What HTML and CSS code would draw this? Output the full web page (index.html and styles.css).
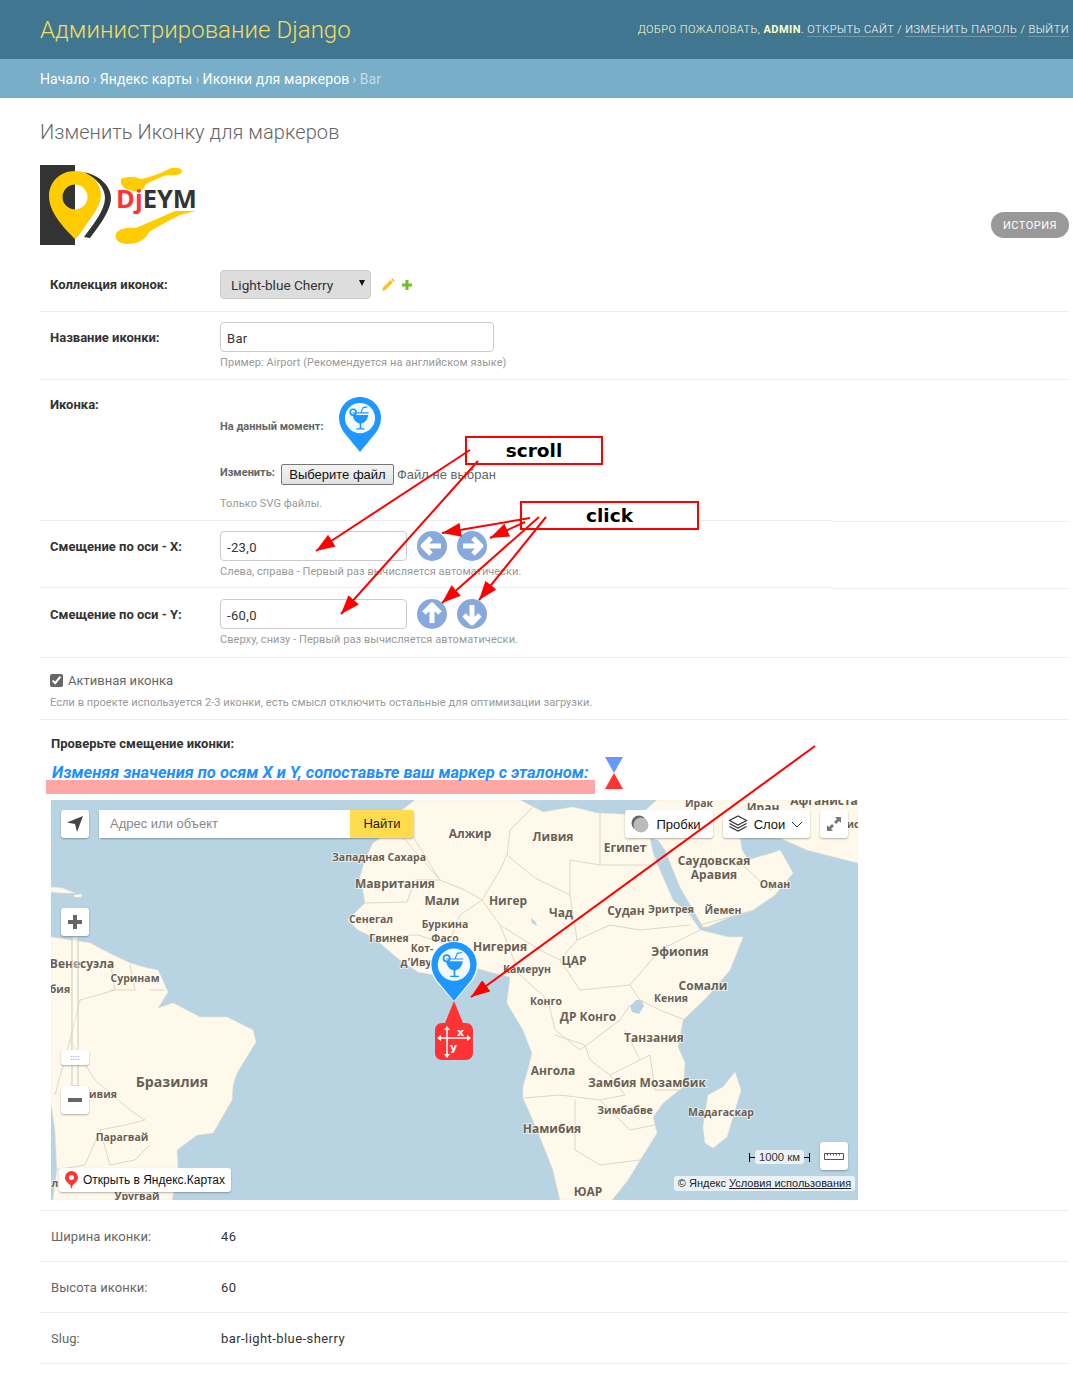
FILE: index.html
```html
<!DOCTYPE html>
<html lang="ru">
<head>
<meta charset="utf-8">
<title>Изменить Иконку для маркеров</title>
<link rel="stylesheet" href="styles.css">
</head>
<body>
<svg class="defs" width="0" height="0" aria-hidden="true">
  <defs>
    <symbol id="pin" viewBox="0 0 46 60">
      <path fill="#1e98ff" d="M23 0C10.300 0 0 10.300 0 23c0 6.200 2.400 11.200 5.500 15.800L23 60l17.500-21.200C43.600 34.200 46 29.200 46 23 46 10.300 35.700 0 23 0z"/>
      <circle cx="23" cy="23" r="16.500" fill="#f4faff"/>
      <path fill="#1e98ff" d="M15 19.500h17c-.6 4.800-3.600 8.400-7.600 9.500v5.200h3.600v1.300h-9v-1.300h3.600V29c-4-1.100-7-4.700-7.600-9.500z"/>
      <path fill="none" stroke="#1e98ff" stroke-width="1.200" d="M15 17.300h17.500M24 17l2.500-5.500 4.500-.8"/>
      <circle cx="15.500" cy="16.500" r="3.200" fill="none" stroke="#1e98ff" stroke-width="1.800"/>
    </symbol>
    <marker id="head" markerUnits="userSpaceOnUse" markerWidth="20" markerHeight="14" refX="19" refY="7" orient="auto">
      <path d="M0 0L19 7 0 14z" fill="#f00"/>
    </marker>
  </defs>
</svg>

<header class="site-header">
  <div class="branding">Администрирование Django</div>
  <div class="user-tools">Добро пожаловать, <strong>admin</strong>. <a>Открыть сайт</a> / <a>Изменить пароль</a> / <a>Выйти</a></div>
</header>
<nav class="crumbs"><a>Начало</a> <i>›</i> <a>Яндекс карты</a> <i>›</i> <a>Иконки для маркеров</a> <i>›</i> <span>Bar</span></nav>

<main class="content">
  <h1>Изменить Иконку для маркеров</h1>
  <div class="logo-bar">
    <svg class="logo" width="160" height="80" viewBox="40 165 160 80">
      <rect x="40" y="165" width="35" height="80" fill="#333"/>
      <path fill="#fc0" d="M75 171c-15 0-26 11-26 25 0 16 14 31 26 43 4-3 7-8 11-14 7-10 15-20 15-30 0-13-11-24-26-24z"/>
      <circle cx="75" cy="197" r="12.500" fill="#fff"/>
      <path fill="#333" d="M75 184.500a12.500 12.500 0 0 0 0 25z"/>
      <path fill="#333" d="M84 172c14 3 27 13 27 26 0 13-14 31-21 40l-6-1c9-12 21-27 21-39 0-11-9-20-21-26z"/>
      <path fill="#fc0" d="M121 179c6-3 15-2 20 0 10-2 19-6 26-9 4-3 14-3 15 1 0 4-8 5-14 4-6 1-13 5-22 9-2 5-5 8-12 7-7 0-15-5-13-12z"/>
      <path fill="#fc0" d="M196 211l-16 4c-11 5-21 11-31 17-3 8-12 12-21 12-9 0-14-5-12-10 2-5 10-7 20-6 14-6 27-12 39-17z"/>
      <text class="logo-text" x="116" y="208"><tspan class="logo-red">Dj</tspan>EYM</text>
    </svg>
    <a class="history">История</a>
  </div>

  <form class="admin-form">
    <div class="row row-collection">
      <label class="lbl">Коллекция иконок:</label>
      <div class="picker-wrap"><select class="picker"><option>Light-blue Cherry</option></select></div>
      <svg class="mini pencil" width="14" height="14" viewBox="0 0 14 14"><path fill="#f4c430" d="M2 9.500L9.500 2l2.500 2.500L4.500 12 1 13z"/><path fill="#e8a800" d="M10.300 1.200l1-.7 2.200 2.200-.7 1z"/></svg>
      <svg class="mini plus" width="12" height="12" viewBox="0 0 12 12"><path fill="#70bf2b" d="M4.500 1h3v3.500H11v3H7.500V11h-3V7.500H1v-3h3.500z"/></svg>
    </div>
    <div class="row row-name">
      <label class="lbl">Название иконки:</label>
      <div class="col">
        <input class="field field-wide" value="Bar">
        <p class="help">Пример: Airport (Рекомендуется на английском языке)</p>
      </div>
    </div>
    <div class="row row-icon">
      <label class="lbl lbl-icon">Иконка:</label>
      <div class="col">
        <div class="current"><span class="sub sub-now">На данный момент:</span><svg class="pin-small" width="42" height="55"><use href="#pin"/></svg></div>
        <div class="change"><span class="sub sub-change">Изменить:</span><span class="file-btn">Выберите файл</span><span class="file-none">Файл не выбран</span></div>
        <p class="help help-file">Только SVG файлы.</p>
      </div>
    </div>
    <div class="row row-x">
      <label class="lbl lbl-offset">Смещение по оси - X:</label>
      <div class="col">
        <div class="offset">
          <input class="field field-mid" value="-23,0">
          <svg class="round" width="30" height="30" viewBox="0 0 30 30"><circle cx="15" cy="15" r="15" fill="#87a9dc"/><path d="M14 7l-8 8 8 8M7 15h17" fill="none" stroke="#fff" stroke-width="5" stroke-linejoin="round"/></svg>
          <svg class="round" width="30" height="30" viewBox="0 0 30 30"><circle cx="15" cy="15" r="15" fill="#87a9dc"/><path d="M16 7l8 8-8 8M23 15H6" fill="none" stroke="#fff" stroke-width="5" stroke-linejoin="round"/></svg>
        </div>
        <p class="help">Слева, справа - Первый раз вычисляется автоматически.</p>
      </div>
    </div>
    <div class="row row-y">
      <label class="lbl lbl-offset">Смещение по оси - Y:</label>
      <div class="col">
        <div class="offset">
          <input class="field field-mid" value="-60,0">
          <svg class="round" width="30" height="30" viewBox="0 0 30 30"><circle cx="15" cy="15" r="15" fill="#87a9dc"/><path d="M7 14l8-8 8 8M15 7v17" fill="none" stroke="#fff" stroke-width="5" stroke-linejoin="round"/></svg>
          <svg class="round" width="30" height="30" viewBox="0 0 30 30"><circle cx="15" cy="15" r="15" fill="#87a9dc"/><path d="M7 16l8 8 8-8M15 23V6" fill="none" stroke="#fff" stroke-width="5" stroke-linejoin="round"/></svg>
        </div>
        <p class="help">Сверху, снизу - Первый раз вычисляется автоматически.</p>
      </div>
    </div>
    <div class="row row-active">
      <label class="check"><input type="checkbox" checked> Активная иконка</label>
      <p class="help help-active">Если в проекте используется 2-3 иконки, есть смысл отключить остальные для оптимизации загрузки.</p>
    </div>
    <div class="row row-map">
      <div class="map-title">Проверьте смещение иконки:</div>
      <div class="map-head">
        <div class="note-wrap">
          <div class="note">Изменяя значения по осям X и Y, сопоставьте ваш маркер с эталоном:</div>
          <div class="band"></div>
        </div>
        <svg class="hourglass" width="18" height="32" viewBox="0 0 18 32"><path fill="#6699ff" d="M0 0h18L9 16z"/><path fill="#ff3333" d="M9 16l9 16H0z"/></svg>
      </div>
      <div class="map">
        <svg class="map-art" width="807" height="400" viewBox="51 800 807 400">
          <rect x="51" y="800" width="807" height="400" fill="#b8d4e3"/>
          <path class="land" d="M415 800L402 810 395 828 373 843 365 860 360 877 363 890 365 903 348 920 358 930 373 937 388 950 400 960 418 972 440 976 473 967 490 972 510 977 507 1003 523 1030 532 1053 528 1070 523 1087 523 1098 532 1118 540 1137 553 1170 560 1200 612 1200 628 1180 640 1160 657 1133 653 1117 663 1103 683 1087 685 1063 678 1047 683 1020 707 997 730 970 743 937 728 937 700 930 690 915 673 900 662 875 653 853 650 838 640 815 597 813 573 807 543 812 520 800z"/>
          <path class="land" d="M640 815L657 800 858 800 858 863 807 850 780 838 740 838 742 850 748 860 772 853 780 850 793 873 775 895 753 910 730 917 707 927 703 927 680 887 665 850 658 840 650 838z"/>
          <path class="land" d="M51 937L90 943 113 955 130 963 147 968 158 970 168 992 158 1008 173 1003 200 1017 227 1017 253 1030 256 1042 237 1073 233 1085 232 1100 213 1133 197 1135 177 1150 178 1170 172 1200 53 1200 57 1170 55 1130 51 1103z"/>
          <path class="land" d="M51 887L62 888 75 893 62 893 51 892zM74 895L82 894 81 897 74 897z"/>
          <path class="land" d="M735 1072L741 1090 735 1110 727 1137 713 1148 705 1143 703 1127 708 1095 723 1087z"/>
          <path class="water" d="M636 1000h6l2 6-5 8-7-2-2-6zM531 918l4 3 2 5-5-3z"/>
          <path class="border" d="M395 828L440 880 415 880 407 902 365 903M402 810L415 840 440 880 465 890 482 900 500 870 507 855 510 830 540 800M507 855L535 878 570 895 570 860 600 865 652 865M600 865L600 813M570 895L577 940 560 960 540 950 500 925 482 900 460 915 448 945 418 935 373 937M577 940L610 925 640 930 690 925M560 960L580 990 630 985 660 950 700 930M630 985L640 1000 660 1010 685 1020M500 925L520 975 548 1000 555 1030 580 1050 620 1020 630 1005M555 1035L585 1045 590 1060 610 1075 625 1095 600 1100 560 1095 524 1098M610 1075L640 1060 650 1055 655 1090 680 1090M640 1060L625 1030M575 1100V1150L600 1165 640 1160M600 1100L630 1130 655 1125M737 860L770 890 790 880M700 925L755 910"/>
          <path class="border" d="M110 960L115 990 80 1000 70 1040 95 1080 130 1110 145 1120 125 1125 100 1130 110 1165 135 1160 150 1145M150 990L165 990M110 990L135 990 130 965M70 1040L55 1095M100 1130L85 1165 55 1170"/>
          <g class="labels">
            <text class="l-md" x="470" y="838">Алжир</text><text class="l-md" x="553" y="841">Ливия</text><text class="l-md" x="625" y="852">Египет</text>
            <text class="l-sm" x="699" y="807">Ирак</text><text class="l-md" x="763" y="812">Иран</text><text class="l-md" x="824" y="805">Афганиста</text><text class="l-sm" x="853" y="828">ис</text>
            <text class="l-sm" x="379" y="861">Западная Сахара</text><text class="l-md" x="395" y="888">Мавритания</text><text class="l-md" x="442" y="905">Мали</text><text class="l-md" x="508" y="905">Нигер</text><text class="l-md" x="561" y="917">Чад</text><text class="l-md" x="626" y="915">Судан</text><text class="l-sm" x="671" y="913">Эритрея</text><text class="l-sm" x="723" y="914">Йемен</text>
            <text class="l-md" x="714" y="865">Саудовская</text><text class="l-md" x="714" y="879">Аравия</text><text class="l-sm" x="775" y="888">Оман</text>
            <text class="l-sm" x="371" y="923">Сенегал</text><text class="l-sm" x="445" y="928">Буркина</text><text class="l-sm" x="445" y="942">Фасо</text><text class="l-sm" x="389" y="942">Гвинея</text><text class="l-sm" x="422" y="952">Кот-</text><text class="l-sm" x="416" y="966">д'Иву</text>
            <text class="l-md" x="500" y="951">Нигерия</text><text class="l-sm" x="527" y="973">Камерун</text><text class="l-md" x="574" y="965">ЦАР</text><text class="l-md" x="680" y="956">Эфиопия</text><text class="l-md" x="703" y="990">Сомали</text><text class="l-sm" x="671" y="1002">Кения</text><text class="l-sm" x="546" y="1005">Конго</text><text class="l-md" x="588" y="1021">ДР Конго</text><text class="l-md" x="654" y="1042">Танзания</text><text class="l-md" x="553" y="1075">Ангола</text><text class="l-md" x="647" y="1087">Замбия Мозамбик</text><text class="l-sm" x="625" y="1114">Зимбабве</text><text class="l-sm" x="721" y="1116">Мадагаскар</text><text class="l-md" x="552" y="1133">Намибия</text><text class="l-md" x="588" y="1196">ЮАР</text>
            <text class="l-md" x="82" y="968">Венесуэла</text><text class="l-sm" x="135" y="982">Суринам</text><text class="l-sm" x="60" y="993">бия</text><text class="l-lg" x="172" y="1087">Бразилия</text><text class="l-sm" x="103" y="1098">ивия</text><text class="l-sm" x="122" y="1141">Парагвай</text><text class="l-sm" x="55" y="1187">л</text><text class="l-sm" x="137" y="1200">Уругвай</text>
          </g>
          <rect class="track" x="72" y="936" width="6" height="150"/>
          <path class="pin-halo" d="M454 941c-13 0-24 10.500-24 23.500 0 6.200 2.500 11.500 5.500 16L454 1002l18.500-21.500c3-4.500 5.500-9.800 5.500-16C478 951.500 467 941 454 941z"/>
          <use href="#pin" x="431" y="942" width="46" height="59"/>
          <path fill="#ff3333" d="M454 1001l9 22h3c4 0 7 3 7 7v23c0 4-3 7-7 7h-24c-4 0-7-3-7-7v-23c0-4 3-7 7-7h3z"/>
          <path fill="none" stroke="#fff" stroke-width="1.500" d="M439 1038h31M447 1029v28"/>
          <path fill="#fff" d="M437 1038l4-3v6zM471 1038l-4-3v6zM447 1026l-3 4h6zM447 1058l-3-4h6z"/>
          <text class="xy" x="457" y="1036">x</text><text class="xy" x="450" y="1051">y</text>
        </svg>

        <div class="ctl ctl-locate"><svg width="18" height="18" viewBox="0 0 18 18"><path fill="#444" d="M17 1L1 7.500l8 1.500 2 8z"/></svg></div>
        <div class="search"><span class="search-input">Адрес или объект</span><span class="search-btn">Найти</span></div>
        <div class="ctl ctl-traffic"><svg width="18" height="18" viewBox="0 0 18 18"><circle cx="8" cy="8" r="7.500" fill="#666"/><circle cx="10" cy="10" r="7.500" fill="#bbb"/></svg><span>Пробки</span></div>
        <div class="ctl ctl-layers"><svg width="20" height="18" viewBox="0 0 20 18"><path fill="#fff" stroke="#333" stroke-width="1.200" d="M10 1l8.500 4.500-8.500 4.500-8.500-4.500z"/><path fill="none" stroke="#333" stroke-width="1.200" d="M1.500 8.500l8.500 4.500 8.500-4.500M1.500 11.500l8.500 4.500 8.500-4.500"/></svg><span>Слои</span><svg width="12" height="7" viewBox="0 0 12 7"><path fill="none" stroke="#333" d="M1 1l5 5 5-5"/></svg></div>
        <div class="ctl ctl-full"><svg width="16" height="16" viewBox="0 0 16 16"><path fill="#777" d="M9 1h6v6l-2-2-3 3-2-2 3-3zM7 15H1V9l2 2 3-3 2 2-3 3z"/></svg></div>
        <div class="ctl ctl-plus"><svg width="14" height="14" viewBox="0 0 14 14"><path fill="#666" d="M5 0h4v5h5v4H9v5H5V9H0V5h5z"/></svg></div>
        <div class="ctl ctl-handle"><span class="dots">::::</span></div>
        <div class="ctl ctl-minus"><svg width="14" height="4" viewBox="0 0 14 4"><rect width="14" height="4" fill="#666"/></svg></div>
        <div class="ctl ctl-open"><svg width="13" height="18" viewBox="0 0 13 18"><path fill="#f33" d="M6.500 0a6.500 6.500 0 0 1 6.500 6.500c0 3.500-3.500 5.500-5.500 8L6.500 18 5.500 14.500C3.500 12 0 10 0 6.500A6.500 6.500 0 0 1 6.500 0z"/><circle cx="6.500" cy="6.500" r="2.500" fill="#fff"/></svg><span>Открыть в Яндекс.Картах</span></div>
        <div class="scale"><i class="tick tick-l"></i><span>1000 км</span><i class="tick tick-r"></i></div>
        <div class="ctl ctl-ruler"><svg width="20" height="7" viewBox="0 0 20 7"><path fill="none" stroke="#555" d="M.5.500h19v6H.500zM3.500.500v2M6.500.500v2M9.500.500v2M12.500.500v2M15.500.500v2"/></svg></div>
        <div class="copy">© Яндекс <u>Условия использования</u></div>
      </div>
    </div>
    <div class="row ro"><span class="ro-l">Ширина иконки:</span><span class="ro-v">46</span></div>
    <div class="row ro"><span class="ro-l">Высота иконки:</span><span class="ro-v">60</span></div>
    <div class="row ro"><span class="ro-l">Slug:</span><span class="ro-v">bar-light-blue-sherry</span></div>
  </form>
</main>

<div class="annot">
  <div class="tag tag-scroll">scroll</div>
  <div class="tag tag-click">click</div>
  <svg class="annot-lines" width="1073" height="1394" viewBox="0 0 1073 1394">
    <g fill="none" stroke="#f00" stroke-width="2">
      <line x1="470" y1="450" x2="316" y2="551" marker-end="url(#head)"/>
      <line x1="478" y1="461" x2="341" y2="614" marker-end="url(#head)"/>
      <line x1="530" y1="518" x2="442" y2="533" marker-end="url(#head)"/>
      <line x1="525" y1="522" x2="490" y2="538" marker-end="url(#head)"/>
      <line x1="539" y1="517" x2="442" y2="603" marker-end="url(#head)"/>
      <line x1="546" y1="517" x2="479" y2="600" marker-end="url(#head)"/>
      <line x1="815" y1="746" x2="471" y2="997" marker-end="url(#head)"/>
    </g>
  </svg>
</div>
</body>
</html>
```
FILE: styles.css
```css
* { box-sizing: border-box; }
html, body { margin: 0; padding: 0; }
body { position: relative; height: 1394px; overflow: hidden; background: #fff; color: #333; font-family: Roboto, "Liberation Sans", sans-serif; font-size: 14px; }
.defs { position: absolute; }

.site-header { height: 59px; background: #417690; display: flex; justify-content: space-between; align-items: center; padding: 0 4px 0 40px; }
.branding { color: #f5dd5d; font-size: 24px; font-weight: 300; letter-spacing: .04px; }
.user-tools { color: #ffc; font-size: 11px; letter-spacing: .48px; text-transform: uppercase; font-weight: 300; }
.user-tools strong { font-weight: 700; }
.user-tools a { color: #fff; border-bottom: 1px solid rgba(255,255,255,.25); }

.crumbs { height: 39px; background: #79aec8; padding: 0 40px; display: flex; align-items: center; gap: 3px; color: #fff; font-size: 14px; letter-spacing: .1px; }
.crumbs i { font-style: normal; color: #c4dce8; }
.crumbs span { color: #c4dce8; }

.content { padding: 20px 4px 0 40px; }
h1 { margin: 0 0 19px; font-size: 20px; line-height: 28px; font-weight: 300; color: #666; letter-spacing: .07px; }
.logo-bar { height: 80px; display: flex; justify-content: space-between; align-items: flex-end; }
.logo { display: block; }
.logo-text { font-family: "Open Sans", "Noto Sans", sans-serif; font-size: 25.500px; font-weight: 700; fill: #333; }
.logo-red { fill: #ff3333; }
.history { height: 26px; width: 78px; margin-bottom: 7px; border-radius: 15px; background: #999; color: #fff; font-size: 11px; font-weight: 400; letter-spacing: .5px; text-transform: uppercase; display: flex; align-items: center; justify-content: center; }

.admin-form { margin-top: 11px; }
.row { position: relative; display: flex; border-bottom: 1px solid #eee; padding-left: 10px; font-size: 13px; }
.lbl { width: 170px; flex: none; font-size: 13px; font-weight: 700; color: #333; }
.col { display: flex; flex-direction: column; }
.help { margin: 4px 0 0; font-size: 11px; line-height: 14px; color: #999; letter-spacing: .06px; }

.row-collection { height: 56px; padding-top: 14px; align-items: flex-start; }
.row-collection .lbl { line-height: 29px; }
.picker-wrap { position: relative; width: 151px; height: 29px; flex: none; }
.picker-wrap::after { content: ""; position: absolute; right: 6px; top: 10px; border-left: 3.500px solid transparent; border-right: 3.500px solid transparent; border-top: 6px solid #111; }
.picker { appearance: none; -webkit-appearance: none; display: block; width: 100%; height: 100%; background: #ddd; border: 1px solid #ccc; border-radius: 4px; padding: 0 10px; font: 13.600px Roboto, sans-serif; color: #333; }
.mini { flex: none; margin-top: 8px; }
.pencil { margin-left: 10px; }
.plus { margin-left: 6px; margin-top: 9px; }

.field { height: 30px; border: 1px solid #ccc; border-radius: 4px; padding: 6px 6px 4px; font: 13px Roboto, sans-serif; letter-spacing: .35px; color: #333; background: #fff; }
.field-wide { width: 274px; }
.field-mid { width: 187px; }
.row-name { height: 68px; padding-top: 10px; }
.row-name .lbl, .lbl-offset { line-height: 32px; }

.row-icon { height: 142px; padding-top: 17px; }
.row-icon::after, .row-x::after { content: ""; position: absolute; left: 0; bottom: -1px; width: 792px; height: 2px; background: linear-gradient(#eee 50%, #fff 50%); }
.current { display: flex; align-items: center; gap: 15px; height: 55px; }
.sub { font-size: 11px; font-weight: 700; color: #666; }
.sub-now { margin-top: 3px; }
.pin-small { display: block; }
.change { display: flex; align-items: flex-start; margin-top: 12px; height: 21px; }
.sub-change { margin-right: 6px; line-height: 17px; }
.file-btn { width: 113px; height: 21px; border: 1px solid #767676; border-radius: 2px; background: linear-gradient(#f4f4f4, #e2e2e2); font: 13px "Liberation Sans", sans-serif; color: #111; display: flex; align-items: center; justify-content: center; }
.file-none { margin-left: 3px; font: 13px "Liberation Sans", sans-serif; color: #666; line-height: 21px; }
.help-file { margin-top: 12px; }

.row-x { height: 67px; padding-top: 9px; }
.row-y { height: 69px; padding-top: 10px; }
.offset { display: flex; gap: 10px; align-items: center; }
.round { display: block; flex: none; }

.row-active { height: 62px; padding-top: 15px; flex-direction: column; }
.check { display: flex; align-items: center; height: 15px; color: #666; font-size: 13px; gap: 5px; }
.check input { margin: 0; width: 13px; height: 13px; accent-color: #666; }
.help-active { margin-top: 8px; }

.row-map { height: 491px; padding: 17px 0 0 11px; flex-direction: column; }
.map-title { font-size: 13px; line-height: 14px; font-weight: 700; color: #333; }
.map-head { display: flex; align-items: flex-end; gap: 10px; margin-top: 6px; margin-left: -5px; }
.note-wrap { width: 549px; }
.note { padding: 8px 0 0 6px; font-size: 16.500px; line-height: 15px; font-style: italic; font-weight: 700; color: #1e90ff; white-space: nowrap; }
.band { height: 14px; background: #ffa6a6; }
.hourglass { display: block; margin-bottom: 5px; }

.map { position: relative; width: 807px; height: 400px; margin-top: 6px; overflow: hidden; }
.map-art { display: block; }
.land { fill: #fef9ea; stroke: #f0e8d0; stroke-width: .5; }
.water { fill: #b8d4e3; }
.border { fill: none; stroke: #ddd8c6; stroke-width: 1; }
.labels text { font-family: "Open Sans", "Noto Sans", sans-serif; font-weight: 700; fill: #6b5f4f; stroke: #fff; stroke-opacity: .6; stroke-width: 2px; paint-order: stroke; text-anchor: middle; }
.l-sm { font-size: 10.500px; }
.l-md { font-size: 12px; }
.l-lg { font-size: 14.200px; }
.track { fill: rgba(255,255,255,.35); stroke: #cfcabb; }
.pin-halo { fill: #fff; }
.xy { font-family: "DejaVu Sans", sans-serif; font-size: 11px; font-weight: 700; fill: #fff; }

.ctl { position: absolute; background: #fff; border-radius: 3px; box-shadow: 0 1px 2px rgba(0,0,0,.3); display: flex; align-items: center; justify-content: center; font: 13px "Liberation Sans", sans-serif; color: #111; }
.ctl-locate { left: 10px; top: 10px; width: 28px; height: 28px; }
.search { position: absolute; left: 48px; top: 10px; width: 315px; height: 28px; display: flex; border-radius: 3px; box-shadow: 0 1px 2px rgba(0,0,0,.3); font: 13px "Liberation Sans", sans-serif; }
.search-input { flex: 1; background: #fff; color: #888; padding-left: 11px; line-height: 28px; }
.search-btn { width: 64px; background: #ffdb4d; color: #222; text-align: center; line-height: 28px; border-radius: 0 3px 3px 0; }
.ctl-traffic { left: 574px; top: 10px; width: 88px; height: 28px; gap: 7px; padding-right: 6px; }
.ctl-layers { left: 672px; top: 10px; width: 87px; height: 28px; gap: 6px; padding-right: 2px; }
.ctl-full { left: 769px; top: 10px; width: 28px; height: 28px; }
.ctl-plus { left: 10px; top: 108px; width: 28px; height: 28px; }
.ctl-handle { left: 10px; top: 250px; width: 28px; height: 15px; }
.dots { font-size: 8px; color: #666; }
.ctl-minus { left: 10px; top: 286px; width: 28px; height: 28px; }
.ctl-open { left: 8px; top: 368px; width: 172px; height: 24px; gap: 5px; font-size: 12px; }
.ctl-ruler { left: 769px; top: 342px; width: 28px; height: 28px; }
.scale { position: absolute; left: 698px; top: 350px; height: 14px; display: flex; align-items: center; font: 11.300px "Liberation Sans", sans-serif; color: #333; }
.scale span { background: rgba(255,255,255,.7); border-radius: 3px; padding: 0 4px; line-height: 14px; }
.tick { display: block; width: 6px; height: 9px; }
.tick-l { border-left: 1px solid #000; background: linear-gradient(#000,#000) center/100% 1px no-repeat; }
.tick-r { border-right: 1px solid #000; background: linear-gradient(#000,#000) center/100% 1px no-repeat; }
.copy { position: absolute; left: 623px; top: 376px; width: 181px; height: 15px; background: rgba(255,255,255,.7); border-radius: 3px; text-align: center; font: 11px/15px "Liberation Sans", sans-serif; color: #222; white-space: nowrap; }

.ro { height: 51px; padding: 0 0 0 11px; align-items: center; }
.ro-l { width: 170px; flex: none; color: #666; font-size: 13px; letter-spacing: .06px; }
.ro-v { color: #333; font-size: 13px; letter-spacing: .43px; }

.annot { position: absolute; left: 0; top: 0; width: 1073px; height: 1394px; pointer-events: none; }
.annot-lines { position: absolute; left: 0; top: 0; }
.tag { position: absolute; background: #fff; border: 2px solid #f00; font: 700 18.500px "DejaVu Sans", sans-serif; color: #000; display: flex; align-items: center; justify-content: center; }
.tag-scroll { left: 465px; top: 436px; width: 138px; height: 29px; }
.tag-click { left: 520px; top: 501px; width: 179px; height: 29px; }
```
